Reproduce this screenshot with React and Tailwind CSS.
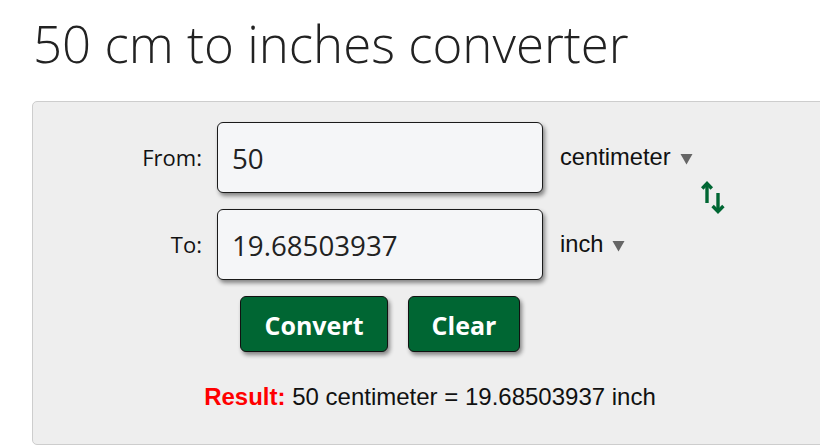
import { useState } from 'react'

// 50 cm → inch converter card
const FACTOR = 0.3937007874

function Caret() {
  return (
    <svg width="13" height="12" viewBox="0 0 13 12" className="ml-[9px] mt-[3px]" aria-hidden>
      <path d="M0.5 1 L12.5 1 L6.5 11.5 Z" fill="#666666" />
    </svg>
  )
}

function SwapIcon() {
  return (
    <svg width="25" height="33" viewBox="0 0 25 33" aria-hidden>
      <g fill="none" stroke="#006633" strokeWidth="3.4" strokeLinejoin="miter" strokeLinecap="butt">
        <path d="M6 3 L6 22" />
        <path d="M1.2 7.5 L6 2.5 L10.8 7.5" />
        <path d="M17 12 L17 30" />
        <path d="M11.6 25 L17 30.5 L22.4 25" />
      </g>
    </svg>
  )
}

function Row({ label, value, unit, onChange, className = '' }) {
  return (
    <div className={`flex items-center ${className}`}>
      <label className="w-[169px] text-right font-['Open_Sans',sans-serif] text-[22px] text-[#111]">
        {label}
      </label>
      <input
        value={value}
        onChange={onChange}
        className="ml-[15px] h-[71px] w-[326px] rounded-[6px] border border-[#1a1a1a] bg-[#f5f6f8] pl-[14px] font-['Open_Sans',sans-serif] text-[27.7px] text-[#222] shadow-[2px_3px_4px_rgba(0,0,0,0.45)] outline-none"
      />
      <span className="ml-[17px] flex items-center font-['Liberation_Sans',Arial,sans-serif] text-[23.7px] text-[#111]">
        {unit}
        <Caret />
      </span>
    </div>
  )
}

export default function App() {
  const [cm, setCm] = useState('50')
  const inch = (parseFloat(cm) * FACTOR).toFixed(8).replace(/\.?0+$/, '')

  return (
    <div className="h-[446px] w-[820px] overflow-hidden bg-white">
      <h1 className="h-[101px] pl-[33px] pt-[8px] font-['Open_Sans',sans-serif] text-[51px] font-light leading-[70px] text-[#222]">
        50 cm to inches converter
      </h1>

      <section className="ml-[32px] h-[344px] w-[796px] rounded-[5px] border border-[#cdcdcd] bg-[#eeeeee] pt-[20px]">
        <div className="relative">
          <Row label="From:" value={cm} unit="centimeter" onChange={(e) => setCm(e.target.value)} />
          <Row label="To:" value={inch} unit="inch" className="mt-[16px]" onChange={() => {}} />

          <div className="absolute left-[668px] top-[59px]">
            <SwapIcon />
          </div>

          <div className="ml-[184px] mt-[16px] flex w-[326px] justify-center gap-[20px]">
            <button className="h-[56px] w-[148px] rounded-[6px] border border-[#111] bg-[#006633] pt-[3px] font-['Open_Sans',sans-serif] text-[25px] font-bold text-white shadow-[2px_3px_4px_rgba(0,0,0,0.45)]">
              Convert
            </button>
            <button
              onClick={() => setCm('')}
              className="h-[56px] w-[112px] rounded-[6px] border border-[#111] bg-[#006633] pt-[3px] font-['Open_Sans',sans-serif] text-[25px] font-bold text-white shadow-[2px_3px_4px_rgba(0,0,0,0.45)]"
            >
              Clear
            </button>
          </div>

          <p className="mt-[31px] text-center font-['Liberation_Sans',Arial,sans-serif] text-[24px] leading-[28px] text-[#111]">
            <span className="font-bold text-[#ff0000]">Result:</span> {cm} centimeter = {inch} inch
          </p>
        </div>
      </section>
    </div>
  )
}
